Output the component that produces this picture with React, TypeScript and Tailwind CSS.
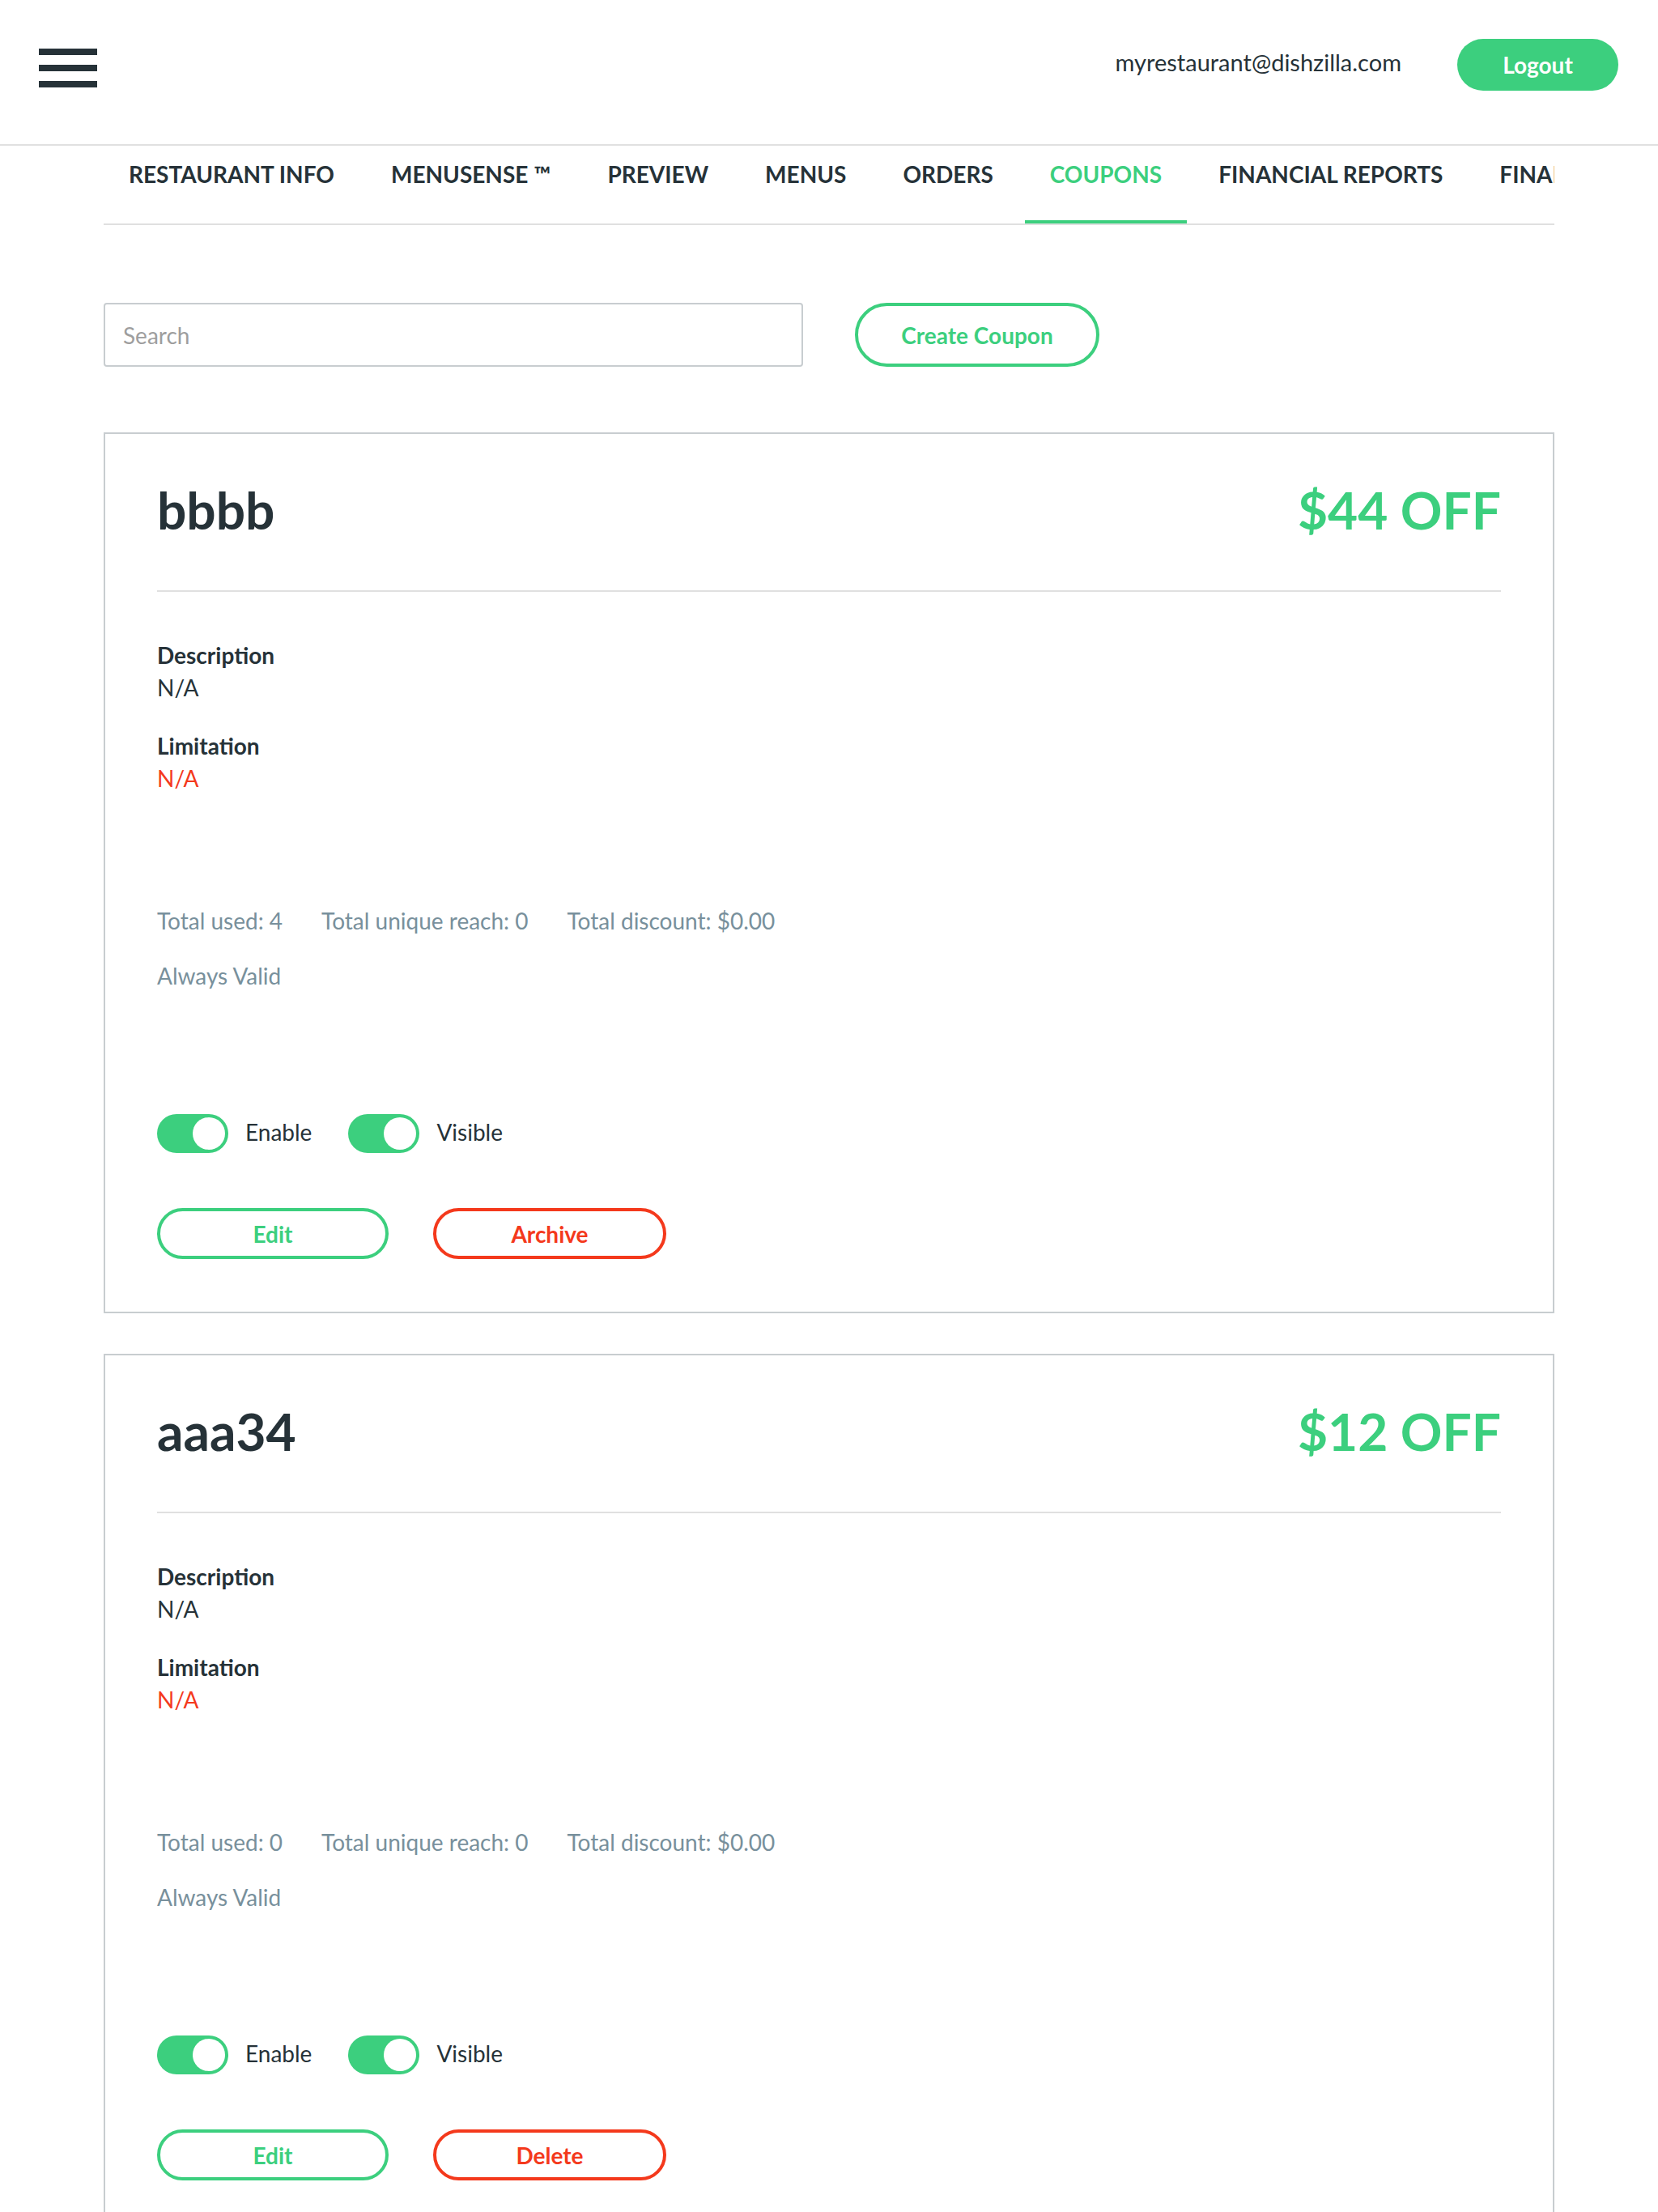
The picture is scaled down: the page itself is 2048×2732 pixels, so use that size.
import { useState } from "react";

const tabs = [
  "RESTAURANT INFO",
  "MENUSENSE ™",
  "PREVIEW",
  "MENUS",
  "ORDERS",
  "COUPONS",
  "FINANCIAL REPORTS",
  "FINANCIAL SETTINGS",
];

const coupons = [
  { id: 1, name: "bbbb", amount: "$44 OFF", used: 4, action: "Archive" },
  { id: 2, name: "aaa34", amount: "$12 OFF", used: 0, action: "Delete" },
];

function Toggle({ on, onClick }: { on: boolean; onClick: () => void }) {
  return (
    <button
      onClick={onClick}
      className={`relative block w-[88px] h-[48px] rounded-full shrink-0 ${
        on ? "bg-[#3ccf7e]" : "bg-[#cfd8dc]"
      }`}
    >
      <span
        className={`absolute top-[4px] w-[40px] h-[40px] rounded-full bg-white ${
          on ? "right-[4px]" : "left-[4px]"
        }`}
      />
    </button>
  );
}

function CouponCard({ coupon }: { coupon: (typeof coupons)[number] }) {
  const [enabled, setEnabled] = useState(true);
  const [visible, setVisible] = useState(true);

  return (
    <div className="border-2 border-[#c8cdd0] px-[64px] pt-[55px] pb-[65px]">
      {/* Title */}
      <div className="flex items-center justify-between text-[64px] font-bold leading-[77px]">
        <h2>{coupon.name}</h2>
        <span className="text-[#3ccf7e]">{coupon.amount}</span>
      </div>
      <div className="mt-[61px] h-[2px] bg-[#e0e0e0]" />

      {/* Details */}
      <div className="mt-[58px] text-[28px] leading-[40px]">
        <div className="font-bold">Description</div>
        <div>N/A</div>
        <div className="mt-[32px] font-bold">Limitation</div>
        <div className="text-[#f4391c]">N/A</div>
      </div>

      {/* Stats */}
      <div className="mt-[136px] flex gap-[48px] text-[28px] leading-[40px] text-[#78909c]">
        <span>Total used: {coupon.used}</span>
        <span>Total unique reach: 0</span>
        <span>Total discount: $0.00</span>
      </div>
      <div className="mt-[28px] text-[28px] leading-[40px] text-[#78909c]">
        Always Valid
      </div>

      {/* Toggles */}
      <div className="mt-[151px] h-[48px] flex items-center text-[28px] leading-[40px]">
        <Toggle on={enabled} onClick={() => setEnabled(!enabled)} />
        <span className="ml-[21px] pb-[4px]">Enable</span>
        <div className="ml-[45px] flex">
          <Toggle on={visible} onClick={() => setVisible(!visible)} />
        </div>
        <span className="ml-[21px] pb-[4px]">Visible</span>
      </div>

      {/* Actions */}
      <div className="mt-[68px] flex gap-[55px]">
        <button className="w-[286px] h-[63px] rounded-full border-[4px] border-[#3ccf7e] text-[28px] font-bold text-[#3ccf7e]">
          Edit
        </button>
        <button className="w-[288px] h-[63px] rounded-full border-[4px] border-[#f4391c] text-[28px] font-bold text-[#f4391c]">
          {coupon.action}
        </button>
      </div>
    </div>
  );
}

export default function App() {
  const [activeTab, setActiveTab] = useState("COUPONS");

  return (
    <div className="min-h-screen bg-white font-['Lato','Open_Sans',sans-serif] text-[#263238]">
      {/* Header */}
      <header className="h-[180px] flex items-start justify-between border-b-2 border-[#e0e0e0] pl-[48px] pr-[49px]">
        <button className="mt-[60px] flex flex-col gap-[12px]">
          <span className="block w-[72px] h-[8px] bg-[#263238]" />
          <span className="block w-[72px] h-[8px] bg-[#263238]" />
          <span className="block w-[72px] h-[8px] bg-[#263238]" />
        </button>
        <div className="mt-[48px] flex items-center gap-[69px]">
          <span className="text-[29px] pb-[6px]">myrestaurant@dishzilla.com</span>
          <button className="w-[199px] h-[64px] rounded-full bg-[#3ccf7e] text-white text-[28px] font-bold">
            Logout
          </button>
        </div>
      </header>

      <main className="mx-[128px]">
        {/* Tabs */}
        <nav className="flex gap-[8px] border-b-2 border-[#e0e0e0] overflow-hidden">
          {tabs.map((tab) => {
            const isActive = tab === activeTab;
            return (
              <button
                key={tab}
                onClick={() => setActiveTab(tab)}
                className={`relative shrink-0 whitespace-nowrap h-[96px] px-[31px] pt-[17px] flex items-start text-[28px] leading-[36px] font-bold ${
                  isActive ? "text-[#3ccf7e]" : "text-[#263238]"
                }`}
              >
                {tab}
                {isActive && (
                  <span className="absolute left-0 right-0 bottom-0 h-[4px] bg-[#3ccf7e]" />
                )}
              </button>
            );
          })}
        </nav>

        {/* Search */}
        <div className="mt-[96px] flex items-center">
          <input
            placeholder="Search"
            className="w-[864px] h-[79px] border-2 border-[#c8cdd0] rounded-[4px] px-[22px] text-[28px] placeholder:text-[#9e9e9e] outline-none"
          />
          <button className="ml-[64px] w-[302px] h-[79px] rounded-full border-[4px] border-[#3ccf7e] text-[28px] font-bold text-[#3ccf7e]">
            Create Coupon
          </button>
        </div>

        {/* Coupons */}
        <div className="mt-[81px] flex flex-col gap-[50px] pb-[60px]">
          {coupons.map((c) => (
            <CouponCard key={c.id} coupon={c} />
          ))}
        </div>
      </main>
    </div>
  );
}
